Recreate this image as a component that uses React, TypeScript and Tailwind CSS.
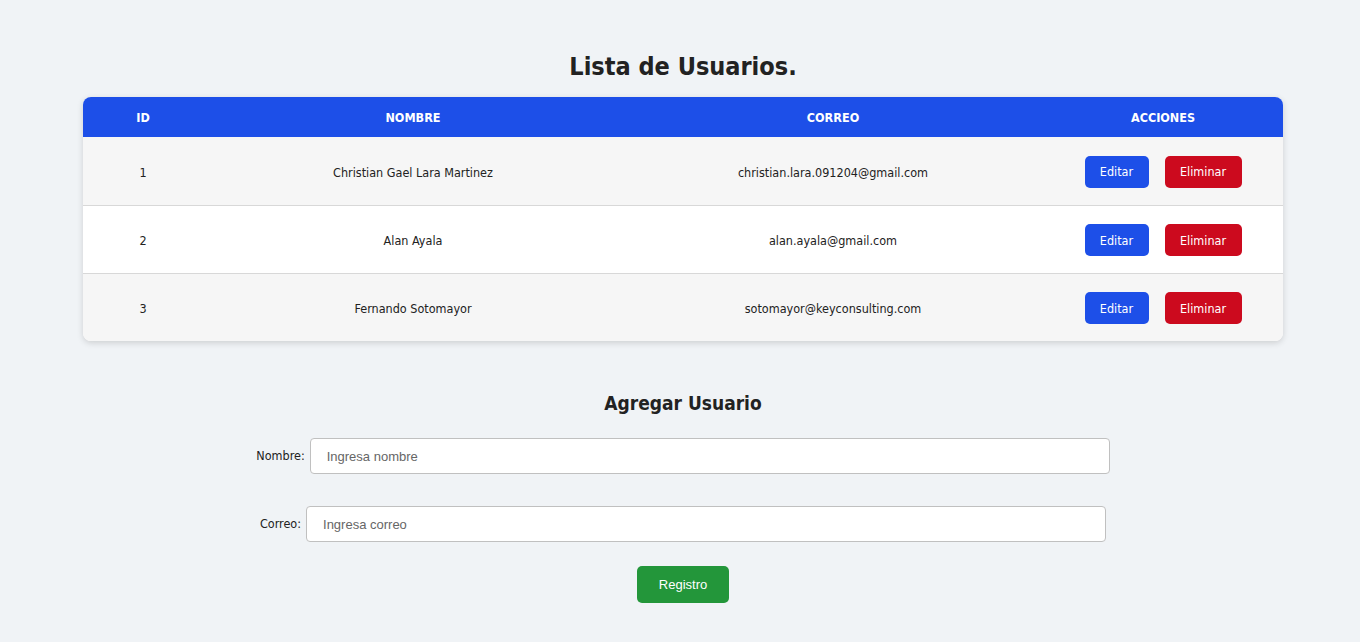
import React from 'react';

const users = [
    { id: 1, nombre: 'Christian Gael Lara Martinez', correo: 'christian.lara.091204@gmail.com' },
    { id: 2, nombre: 'Alan Ayala', correo: 'alan.ayala@gmail.com' },
    { id: 3, nombre: 'Fernando Sotomayor', correo: 'sotomayor@keyconsulting.com' },
];

const tahoma = "font-['DejaVu_Sans_Condensed','DejaVu_Sans',sans-serif]";

export default function App() {
    return (
        <div className={`min-h-[642px] bg-[#f0f3f6] text-[#222] ${tahoma}`}>
            <div className="pt-[50px] pl-[6px] flex flex-col items-center">
                <h1 className="text-[25px] font-bold leading-[34px] text-[#222]">Lista de Usuarios.</h1>

                <div className="mt-[13px] w-[1200px] rounded-lg overflow-hidden shadow-[0_2px_6px_rgba(0,0,0,0.15)] bg-white">
                    <table className="w-full border-collapse text-[12.5px]">
                        <thead>
                            <tr className="bg-[#1d4fe8] text-white h-[40px]">
                                <th className="w-[120px] pt-[2px] font-bold">ID</th>
                                <th className="w-[420px] pt-[2px] font-bold">NOMBRE</th>
                                <th className="w-[420px] pt-[2px] font-bold">CORREO</th>
                                <th className="w-[240px] pt-[2px] font-bold">ACCIONES</th>
                            </tr>
                        </thead>
                        <tbody>
                            {users.map((u, i) => (
                                <tr
                                    key={u.id}
                                    className={`h-[68px] text-center ${i % 2 === 0 ? 'bg-[#f6f6f6]' : 'bg-white'} ${i < users.length - 1 ? 'border-b border-[#d8d8d8]' : ''}`}
                                >
                                    <td className="pt-[5px]">{u.id}</td>
                                    <td className="pt-[5px]">{u.nombre}</td>
                                    <td className="pt-[5px]">{u.correo}</td>
                                    <td className="pt-[2px]">
                                        <div className="flex justify-center gap-4">
                                            <button className="h-[32px] w-[64px] rounded-[5px] bg-[#1d4fe8] pt-[2px] text-white">Editar</button>
                                            <button className="h-[32px] w-[77px] rounded-[5px] bg-[#cc0a1e] pt-[2px] text-white">Eliminar</button>
                                        </div>
                                    </td>
                                </tr>
                            ))}
                        </tbody>
                    </table>
                </div>

                <h2 className="mt-[49px] text-[19px] font-bold leading-[26px] text-[#222]">Agregar Usuario</h2>

                <div className="mt-[22px] flex flex-col items-center gap-[32px] text-[12.5px]">
                    <div className="flex items-center gap-[5px]">
                        <label>Nombre:</label>
                        <input
                            placeholder="Ingresa nombre"
                            className="h-[36px] w-[800px] rounded-[4px] border border-[#c0c0c0] bg-white pl-4 font-['Liberation_Sans',Arial,sans-serif] text-[13px] placeholder:text-[#666] outline-none"
                        />
                    </div>
                    <div className="flex items-center gap-[5px]">
                        <label>Correo:</label>
                        <input
                            placeholder="Ingresa correo"
                            className="h-[36px] w-[800px] rounded-[4px] border border-[#c0c0c0] bg-white pl-4 font-['Liberation_Sans',Arial,sans-serif] text-[13px] placeholder:text-[#666] outline-none"
                        />
                    </div>
                </div>

                <button className="mt-[24px] h-[37px] w-[92px] rounded-[5px] bg-[#23963a] text-white text-[13px] font-medium font-['Liberation_Sans',Arial,sans-serif]">
                    Registro
                </button>
            </div>
        </div>
    );
}
